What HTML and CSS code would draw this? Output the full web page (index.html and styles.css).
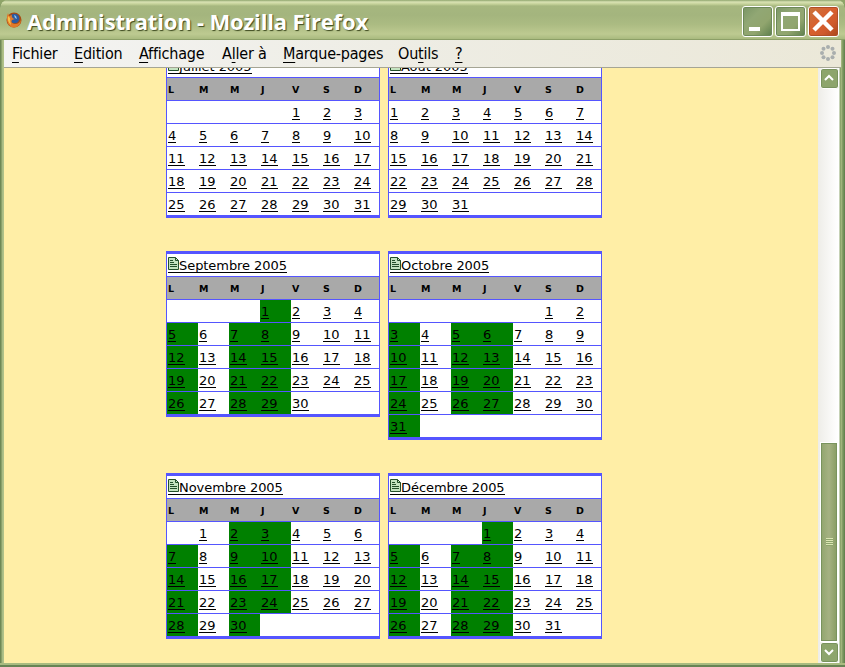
FILE: index.html
```html
<!DOCTYPE html>
<html lang="fr">
<head>
<meta charset="utf-8">
<title>Administration</title>
<link rel="stylesheet" href="styles.css">
</head>
<body>
<div class="window">
  <header class="titlebar">
    <svg class="logo" viewBox="0 0 16 16"><circle cx="8" cy="8" r="7.5" fill="#a84a12"/><circle cx="8.6" cy="6.500" r="4.800" fill="#2c5aa0"/><path d="M8 3l2 1 1 3-2-1z" fill="#8fc4ee"/><path d="M1 4Q0 15 8 15.500Q15 15 15 7Q14 12 9 12Q4 11 6 8L9 7Q5 6 6 3L3 4L2 1Z" fill="#e07a2a"/><path d="M2 4Q1 10 5 13Q4 8 4 6Z" fill="#f7c04a"/></svg>
    <h1>Administration - Mozilla Firefox</h1>
    <div class="controls">
      <span class="btn"><svg viewBox="0 0 28 28"><path d="M6 20h11v4H6z" fill="#fff"/></svg></span>
      <span class="btn"><svg viewBox="0 0 28 28"><path d="M5 5h19v19H5zM7 9v13h15V9z" fill="#fff" fill-rule="evenodd"/></svg></span>
      <span class="btn close"><svg viewBox="0 0 28 28"><path d="M5 5L23 23M23 5L5 23" stroke="#fff" stroke-width="4.500"/></svg></span>
    </div>
  </header>
  <nav class="menu">
    <span class="m1"><u>F</u>ichier</span><span class="m2"><u>E</u>dition</span><span class="m3"><u>A</u>ffichage</span><span class="m4">A<u>l</u>ler à</span><span class="m5"><u>M</u>arque-pages</span><span class="m6">Ou<u>t</u>ils</span><span class="m7"><u>?</u></span>
    <svg class="throbber" viewBox="0 0 16 16" fill="#a9aeae"><circle cx="8" cy="2" r="2"/><circle cx="12.500" cy="3.700" r="2"/><circle cx="14" cy="8" r="2"/><circle cx="12.500" cy="12.300" r="2"/><circle cx="8" cy="14" r="2"/><circle cx="3.500" cy="12.300" r="2"/><circle cx="2" cy="8" r="2"/><circle cx="3.500" cy="3.700" r="2"/></svg>
  </nav>
  <div class="view">
    <main class="page"><div class="months" id="months"></div></main>
    <aside class="scroll">
      <span class="arrow"><svg viewBox="0 0 16 16"><path d="M4 10l4-4 4 4" fill="none" stroke="#fff" stroke-width="2"/></svg></span>
      <span class="track"></span>
      <span class="thumb"><i></i></span>
      <span class="arrow"><svg viewBox="0 0 16 16"><path d="M4 6l4 4 4-4" fill="none" stroke="#fff" stroke-width="2"/></svg></span>
    </aside>
  </div>
</div>
<script src="calendar.js"></script>
</body>
</html>
```
FILE: styles.css
```css
* { box-sizing: border-box; }
body { margin: 0; background: #8ea468; }
.window {
  width: 845px; height: 667px; padding: 0 4px 4px; overflow: hidden;
  display: flex; flex-direction: column;
  border-radius: 8px 8px 0 0;
  background: linear-gradient(90deg, #6f8856 0, #6f8856 1px, #a5b880 2px, #b4c48c 4px, #b4c48c 841px, #8da56c 842px, #5d7d4a 845px);
  box-shadow: inset 0 -2px #688454, inset 0 -4px #a9bb80;
}
.titlebar {
  flex: none; height: 40px; margin: 0 -4px; padding: 6px 6px 0 6px;
  display: flex; align-items: flex-start;
  border-bottom: 1px solid #8c9f67;
  border-radius: 8px 8px 0 0;
  background: linear-gradient(#8fa56e 0, #d9e2b4 2px, #c5d29a 4px, #a6b77f 6px, #a4b57e 15px, #abbb82 24px, #bdca91 34px, #a9ba7f 39px);
}
.logo { width: 16px; height: 16px; margin: 6px 5px 0 0; }
h1 {
  margin: -2px 0 0; flex: 1; color: #fff; white-space: nowrap;
  font: bold 22px/34px "Open Sans", "Noto Sans", sans-serif; letter-spacing: -.16px;
  text-shadow: 1px 1px 1px #3d4a20;
}
.controls { display: flex; gap: 2px; }
.btn {
  width: 31px; height: 31px; border: 1px solid #fff; border-radius: 3px;
  background: linear-gradient(135deg, #799565, #91a774 35%, #91a56e 65%, #5c7e4c);
  box-shadow: inset 0 0 0 1px #6d8859;
}
.btn svg { display: block; width: 28px; height: 28px; }
.close { background: linear-gradient(135deg, #c9763f, #d8602f 45%, #cf5a2c 70%, #a8451c); box-shadow: inset 0 0 0 1px #b04f28; }
.menu {
  flex: none; height: 28px; position: relative; padding: 0 5px 0 8px;
  display: flex; font: 16px/28px "DejaVu Sans Condensed", "DejaVu Sans", sans-serif; letter-spacing: -.2px;
  background: linear-gradient(100deg, #f4f4f3, #eeede5 45%, #ebe8d8);
  border-bottom: 1px solid #a5a594; white-space: nowrap;
}
.menu u { text-underline-offset: 3px; text-decoration-thickness: 1px; }
.menu span { flex: none; }
.m1 { width: 62px; } .m2 { width: 65px; } .m3 { width: 83px; } .m4 { width: 61px; }
.m5 { width: 115px; } .m6 { width: 57px; } .m7 { width: 20px; }
.throbber { width: 16px; height: 16px; margin: 5px 0 0 auto; }
.view { flex: 1; min-height: 0; display: flex; }
.page { flex: 1; overflow: hidden; background: #ffeea6; padding-left: 162px; }
.months { display: grid; grid-template-columns: 214px 214px; gap: 33px 8px; align-items: start; margin-top: -16px; }
.month { border: 1px solid #5555ff; border-width: 3px 1px; background: #fff; font: 13px/22px "DejaVu Sans", sans-serif; color: #000; }
.caption { height: 22px; display: flex; padding-left: 1px; }
.caption a { display: flex; height: 19px; line-height: 24px; letter-spacing: -.06px; border-bottom: 1px solid #000; }
.caption svg { width: 11px; height: 14px; margin-top: 3px; }
.week { display: grid; grid-template-columns: repeat(6, 31px) 26px; height: 23px; border-top: 1px solid #5555ff; }
.week span { padding: 1px 0 0 1px; line-height: 22px; height: 22px; }
.week.head { background: #a9a9a9; }
.week.head span { font-size: 9.5px; font-weight: bold; padding-top: 1px; }
.week a { display: inline-block; height: 18px; border-bottom: 1px solid #000; }
.week .on { background: #008000; }
.scroll { width: 23px; display: flex; flex-direction: column; padding: 0 3px 0 2px; background: linear-gradient(90deg, #eeede8, #fff 20px, #fff 21px, #8da56c 22px); }
.arrow { flex: none; width: 19px; height: 21px; border: 1px solid #fff; border-radius: 3px; background: #8da56c; box-shadow: inset 0 0 0 1px #79935d; }
.arrow svg { display: block; width: 16px; height: 18px; }
.track { flex: 1; }
.thumb { flex: none; height: 200px; display: flex; align-items: center; justify-content: center; border: 1px solid #fff; background: linear-gradient(90deg, #91a56e, #a5b182 50%, #879c63); box-shadow: inset 0 0 0 1px #79935d; }
.thumb i { width: 7px; height: 8px; background: repeating-linear-gradient(#dce5b4 0 1px, #8da56c 1px 2px); }
```
FILE: calendar.js
```js
// name, number of days, weekday column of day 1, whether booked days are shown
const MONTHS = [
  ["Juillet 2005", 31, 4, false], ["Août 2005", 31, 0, false],
  ["Septembre 2005", 30, 3, true], ["Octobre 2005", 31, 5, true],
  ["Novembre 2005", 30, 1, true], ["Décembre 2005", 31, 3, true]
];
const ICON = '<svg viewBox="0 0 11 14"><path d="M.5.5h7l3 3v9H.5z" fill="#c4e3c0" stroke="#234f2a"/><path d="M7.500.5v3h3M2 3.500h3M2 5.500h4M2 7.500h7M2 9.500h7" fill="none" stroke="#234f2a"/></svg>';
const BOOKED = [0, 2, 3];
document.getElementById("months").innerHTML = MONTHS.map(([name, days, first, booked]) => {
  let html = `<section class="month"><div class="caption"><a>${ICON}${name}</a></div><div class="week head">${[..."LMMJVSD"].map(d => `<span>${d}</span>`).join("")}</div>`;
  for (let start = 1 - first; start <= days; start += 7) {
    html += '<div class="week">';
    for (let c = 0; c < 7; c++) {
      const n = start + c, valid = n > 0 && n <= days;
      html += `<span${booked && valid && BOOKED.includes(c) ? ' class="on"' : ""}>${valid ? `<a>${n}</a>` : ""}</span>`;
    }
    html += "</div>";
  }
  return html + "</section>";
}).join("");
```
